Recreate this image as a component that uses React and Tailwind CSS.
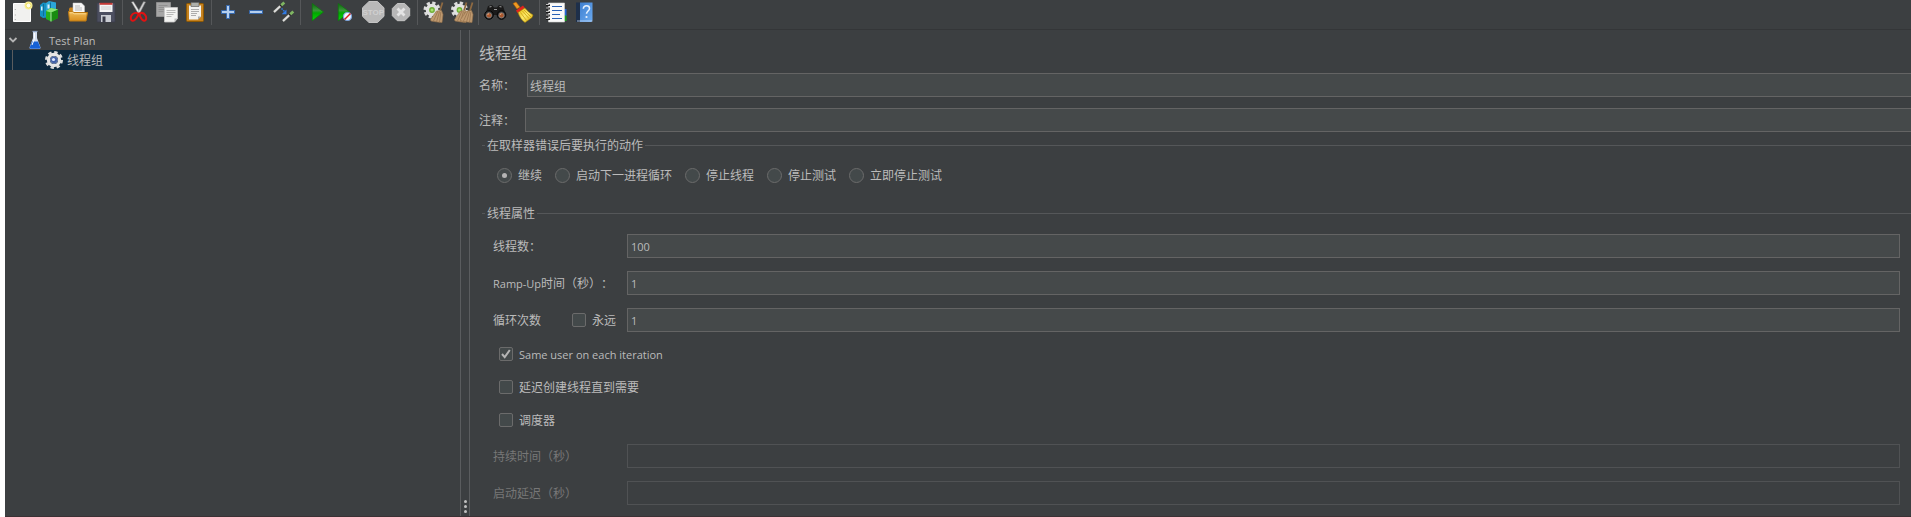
import React from "react";

const Svg = ({ children }) => (
  <svg viewBox="0 0 24 24" className="size-6 shrink-0" aria-hidden="true" fill="none">
    {children}
  </svg>
);

const Defs = () => (
  <svg className="absolute size-0" aria-hidden="true">
    <defs>
      <linearGradient id="green" x1="0" y1="0" x2="0" y2="1">
        <stop offset="0" stopColor="#0a6b0a" />
        <stop offset="0.4" stopColor="#3a943a" />
        <stop offset="0.55" stopColor="#00a800" />
        <stop offset="1" stopColor="#06d806" />
      </linearGradient>
      <linearGradient id="folder" x1="0" y1="0" x2="0" y2="1">
        <stop offset="0" stopColor="#f0bd5a" />
        <stop offset="1" stopColor="#d98f1e" />
      </linearGradient>
      <linearGradient id="blueBook" x1="0" y1="0" x2="1" y2="1">
        <stop offset="0" stopColor="#3f7fd0" />
        <stop offset="1" stopColor="#6aaaf0" />
      </linearGradient>
      <linearGradient id="yellowBroom" x1="0" y1="0" x2="1" y2="1">
        <stop offset="0" stopColor="#e9b80c" />
        <stop offset="0.5" stopColor="#fbe96a" />
        <stop offset="1" stopColor="#d9a800" />
      </linearGradient>
    </defs>
  </svg>
);

const NewIcon = () => (
  <Svg>
    <path d="M3.500 3.500h17v18h-17z" fill="#f1f1ef" stroke="#fff" />
    <path d="M5.300 9v1M5.300 14.500v1M5.300 19v1" stroke="#aaa" strokeWidth="1" />
    <circle cx="18.500" cy="5.500" r="4" fill="#f8ef9a" />
    <circle cx="18.500" cy="5.500" r="2.500" fill="#fffde6" stroke="#e9d84a" strokeWidth="0.800" />
  </Svg>
);
const TemplatesIcon = () => (
  <Svg>
    <path d="M2 5l3-2.500 4 .5v14.500l-4 .5-3-2z" fill="#1592c4" />
    <path d="M8 3l3-2 7 1.500v9l-7 5-3-2z" fill="#2ba6d8" />
    <path d="M12.500 2.500v7M5.500 4v12" stroke="#0f6f99" strokeWidth="1" />
    <path d="M9.500 4.500h2v4h-2zM3 6.500h1.500v4H3z" fill="#d7f0fa" />
    <path d="M8 11l5-3 7 1.500v8.500l-7 3.500-5-2.500z" fill="#27b01c" />
    <path d="M13 12.500l7-3v8.500l-7 3.500z" fill="#178c10" />
    <path d="M8 11l5-3 7 1.500-7 3z" fill="#8ae477" />
    <path d="M13 12.500v9" stroke="#d5f5cf" strokeWidth="0.800" />
  </Svg>
);
const OpenIcon = () => (
  <Svg>
    <path d="M3 13V8.500l1-1h4V16H3z" fill="#c9821c" />
    <path d="M7 3h8.500L18.500 6v9H7z" fill="#f7f7f7" stroke="#c9c9c9" strokeWidth="0.500" />
    <path d="M9 6h5M9 8h7M9 10h7" stroke="#aaa" strokeWidth="0.800" />
    <path d="M2.500 11.500h4l1.500 1h13.500l-1.500 8.500H3.500z" fill="url(#folder)" stroke="#bf7b12" />
    <path d="M3.800 12.800h3l1.500 1h11.500" stroke="#ffe2a0" strokeWidth="0.800" />
  </Svg>
);
const SaveIcon = () => (
  <Svg>
    <path d="M3 3h17.500l.5.500V22H3z" fill="#4c4f60" stroke="#3a3c4a" strokeWidth="0.800" />
    <path d="M5.500 3h13v9h-13z" fill="#f4f4f4" />
    <path d="M5.500 2.800h13v2h-13z" fill="#c53a36" />
    <path d="M7 7h10M7 9h10" stroke="#c6c6c6" strokeWidth="0.800" />
    <path d="M7 15h10v7H7z" fill="#c9ccd2" />
    <path d="M8.500 16.500h3V22h-3z" fill="#393b48" />
  </Svg>
);
const CutIcon = () => (
  <Svg>
    <path d="M4.500 2l2-.3 7.500 12-2 1z" fill="#e8e8e8" stroke="#8c8c8c" strokeWidth="0.500" />
    <path d="M18.500 2l-2-.3L10 13.500l2 1z" fill="#cfcfcf" stroke="#888" strokeWidth="0.500" />
    <path d="M11 13.500c-2-1-5-.5-6.500 2s-.5 5 1 5.200c3 .3 4-3 6.500-6.700z" stroke="#e01212" strokeWidth="2" />
    <path d="M12.500 13.500c2-1 4.500-.5 6 2s.5 5-1 5.200c-3 .3-3.500-3-5.500-6.700z" stroke="#e01212" strokeWidth="2" />
  </Svg>
);
const CopyIcon = () => (
  <Svg>
    <path d="M1.500 2.500h14v14h-14z" fill="#a6a6a6" stroke="#8e8e8e" />
    <path d="M3.500 5.500h9M3.500 7.500h9M3.500 9.500h6M3.500 11.500h5" stroke="#8a8a8a" strokeWidth="0.800" />
    <path d="M9.500 7.500h13v11l-3 3.500h-10z" fill="#f3f3f1" stroke="#c8c8c8" strokeWidth="0.800" />
    <path d="M11.500 10.500h9M11.500 12.500h9M11.500 14.500h7M11.500 16.500h5" stroke="#aaa" strokeWidth="0.800" />
    <path d="M22.500 18.500l-3 3.500v-3.500z" fill="#bbb" />
  </Svg>
);
const PasteIcon = () => (
  <Svg>
    <rect x="3.500" y="3.500" width="17" height="18" rx="1" fill="#c58220" stroke="#8f5902" />
    <path d="M6 5.500h12v11l-3 3H6z" fill="#f3f3f1" />
    <path d="M18 16.500l-3 3v-3z" fill="#aaa" />
    <path d="M8 2.500h8v4H8z" fill="#aeb0ab" stroke="#666" strokeWidth="0.700" />
    <path d="M8 9.500h8M8 11.500h8M8 13.500h6M8 15.500h5" stroke="#a5a5a5" strokeWidth="0.900" />
  </Svg>
);
const PlusIcon = () => (
  <Svg>
    <path d="M10.500 5.500h3v5h5v3h-5v5h-3v-5h-5v-3h5z" fill="#b5cfee" stroke="#3568ae" strokeLinejoin="round" />
  </Svg>
);
const MinusIcon = () => (
  <Svg>
    <path d="M5.500 10.500h13v3h-13z" fill="#b5cfee" stroke="#3568ae" strokeLinejoin="round" />
  </Svg>
);
const ToggleIcon = () => (
  <Svg>
    <path d="M2 12l7-6.500M11 21l7-6.500" stroke="#77796f" strokeWidth="2.800" />
    <path d="M2 12l7-6.500M11 21l7-6.500" stroke="#dedede" strokeWidth="1.800" />
    <path d="M8.300 6.200l1-.9M17.300 15.200l1-.9" stroke="#222" strokeWidth="2.600" />
    <path d="M9.300 5.200l3-2.700M18.300 14.200l3-2.700" stroke="#7fb662" strokeWidth="2.800" />
    <path d="M9.500 8.500l3 3" stroke="#2f7be6" strokeWidth="1.500" strokeDasharray="1.500 1" />
    <path d="M14.500 9.500v4.800H9.700z" fill="#2f7be6" />
  </Svg>
);
const StartIcon = () => (
  <Svg>
    <path d="M7.300 3.500L18.500 12 7.300 20.700z" fill="url(#green)" stroke="#0b7a0b" strokeWidth="0.700" />
  </Svg>
);
const StartNoPauseIcon = () => (
  <Svg>
    <path d="M5.300 3.500L16.500 12 5.300 20.700z" fill="url(#green)" stroke="#0b7a0b" strokeWidth="0.700" />
    <circle cx="14.500" cy="16.500" r="4" fill="#f4f7ff" stroke="#7aa2dc" strokeWidth="1.200" />
    <path d="M11.500 19.500l6-6" stroke="#d81e1e" strokeWidth="1.500" />
  </Svg>
);
const StopIcon = () => (
  <Svg>
    <path d="M8 1.500h8.500l6.500 6.300v8.500L16.500 22.500H8L1.500 16.300V7.800z" fill="#b9b9b9" stroke="#c4c4c4" />
    <text x="12.200" y="15.200" fontSize="8" fontWeight="700" fontFamily="Liberation Sans, sans-serif" textAnchor="middle" fill="#d0d0d0">
      STOP
    </text>
  </Svg>
);
const ShutdownIcon = () => (
  <Svg>
    <path d="M8.300 3.500h7.400l5 5v7.200l-5 5H8.300l-5-5V8.500z" fill="#b7b7b7" stroke="#c4c4c4" />
    <path d="M8.500 8.500l7 7M15.500 8.500l-7 7" stroke="#e4e4e4" strokeWidth="2.800" />
  </Svg>
);
const Cog = ({ cx }) => (
  <g>
    <circle cx={cx} cy="10" r="7" stroke="#dcdcdc" strokeWidth="3" strokeDasharray="3.200 2.300" />
    <circle cx={cx} cy="10" r="4.600" fill="#6fae35" stroke="#e2e2e2" strokeWidth="3.400" />
    <circle cx={cx} cy="10" r="1.500" fill="#a6e070" />
  </g>
);
const Brush = ({ x = 0 }) => (
  <g transform={`translate(${x} 0)`}>
    <path d="M20.500 2.500l-2.500 8" stroke="#8f6a42" strokeWidth="1.800" />
    <path d="M14.500 11l5-.5 1.500 4-1 8-5-.5-6-1-.5-1.500z" fill="#bf9a70" stroke="#94704a" strokeWidth="0.600" />
    <path d="M16 11l-4.500 10M17.500 11.500l-3 10.500M18.800 12l-1.300 10.500" stroke="#94704a" strokeWidth="0.700" />
  </g>
);
const ClearIcon = () => (
  <Svg>
    <Cog cx={10} />
    <Brush />
  </Svg>
);
const ClearAllIcon = () => (
  <Svg>
    <Cog cx={9.5} />
    <Brush x={-4} />
    <Brush x={2} />
  </Svg>
);
const SearchIcon = () => (
  <Svg>
    <path d="M5 6l4-1 2 2.500h3L16 5l4 1 3 9H2z" fill="#1a1a1a" />
    <path d="M6.500 7l2-.5M16.500 6.500l2 .5M11 9.500h3" stroke="#999" strokeWidth="1.200" />
    <circle cx="6" cy="15" r="4.300" fill="#2a2a2a" stroke="#050505" />
    <circle cx="18.500" cy="15" r="4.300" fill="#2a2a2a" stroke="#050505" />
    <circle cx="6" cy="15.300" r="2.600" fill="#a9562c" stroke="#888" strokeWidth="0.800" />
    <circle cx="18.500" cy="15.300" r="2.600" fill="#a9562c" stroke="#888" strokeWidth="0.800" />
    <path d="M4.500 14.500l1.500-.8M17 14.500l1.500-.8" stroke="#f0b58a" strokeWidth="1" />
  </Svg>
);
const BroomIcon = () => (
  <Svg>
    <path d="M2 3.500l3-1.500 4 5-3 2z" fill="#ef9a22" stroke="#a65c08" strokeWidth="0.600" />
    <path d="M5 10.500l7-5 1.800 2.500-7.300 5z" fill="#e2241c" />
    <path d="M7 12.500l6.800-4.500c2.500 3 5 5 8.200 7l-1 2.500-7 5c-3-2-5.500-5.500-7-10z" fill="url(#yellowBroom)" stroke="#a98400" strokeWidth="0.600" />
    <path d="M9.500 12.500l6 8M11.500 11l6.500 7.500M13 10l7 7" stroke="#c99a08" strokeWidth="0.700" />
  </Svg>
);
const ListIcon = () => (
  <Svg>
    <path d="M18 9h4.500v7H18z" fill="#2467d8" />
    <path d="M18 15.500h4.500V21H18z" fill="#18a01e" />
    <path d="M4.500 3h16v19h-16z" fill="#fafafa" stroke="#d5d5d5" strokeWidth="0.600" />
    <path d="M8 6.500h10M8 10.500h10M8 14.500h8M8 18.500h10" stroke="#2b62b5" strokeWidth="1.200" />
    <path d="M2 5h4M2 8.500h4M2 12h4M2 15.500h4M2 19h4" stroke="#1a1a1a" strokeWidth="1.800" />
    <path d="M2 4.500h3.500M2 8h3.500M2 11.500h3.500M2 15h3.500M2 18.500h3.500" stroke="#e6e6e6" strokeWidth="0.800" />
  </Svg>
);
const HelpIcon = () => (
  <Svg>
    <path d="M4 2.500h5v19.500H4z" fill="#1d2f4a" />
    <path d="M8 2.500h12.500V20l-1 2H8z" fill="url(#blueBook)" />
    <path d="M5 21h15.500" stroke="#c4d8f2" strokeWidth="0.800" />
    <path d="M11.300 8.700c.2-2 1.500-3 3.200-3 1.800 0 3 1 3 2.700 0 2.300-3 2.800-3 5.300" stroke="#e8f2ff" strokeWidth="1.500" />
    <circle cx="14.500" cy="17" r="1.100" fill="#e8f2ff" />
  </Svg>
);

const toolbar = [
  [["New", NewIcon], ["Templates", TemplatesIcon], ["Open", OpenIcon], ["Save", SaveIcon]],
  [["Cut", CutIcon], ["Copy", CopyIcon], ["Paste", PasteIcon]],
  [["Expand all", PlusIcon], ["Collapse all", MinusIcon], ["Toggle", ToggleIcon]],
  [["Start", StartIcon], ["Start no pauses", StartNoPauseIcon], ["Stop", StopIcon], ["Shutdown", ShutdownIcon]],
  [["Clear", ClearIcon], ["Clear all", ClearAllIcon]],
  [["Search", SearchIcon], ["Reset search", BroomIcon]],
  [["Function helper", ListIcon], ["Help", HelpIcon]],
];

function Toolbar() {
  return (
    <div role="toolbar" className="flex h-[30px] shrink-0 items-start border-b border-[#343638] pl-[3px]">
      {toolbar.map((group, i) => (
        <React.Fragment key={i}>
          {i > 0 && <span className="mx-0.5 h-[25px] w-px bg-[#555759]" />}
          {group.map(([name, Icon]) => (
            <button key={name} type="button" aria-label={name} className="flex w-7 justify-center">
              <Icon />
            </button>
          ))}
        </React.Fragment>
      ))}
    </div>
  );
}

const Latin = ({ children }) => <span className="font-['Open_Sans',sans-serif] text-[11px]">{children}</span>;

function Tree() {
  return (
    <nav className="w-[456px] shrink-0 border-r border-[#5a5c5e]">
      <div className="flex h-5 items-center pl-[3px]">
        <svg viewBox="0 0 10 10" className="size-2.5" fill="none" aria-hidden="true">
          <path d="M1.500 3L5 6.500 8.500 3" stroke="#b4b4b4" strokeWidth="1.800" />
        </svg>
        <svg viewBox="0 0 20 20" className="ml-[7px] size-5" aria-hidden="true">
          <path d="M8 2h4v6l3.500 9.500q0 1.500-1.500 1.500H6Q4.500 19 4.500 17.500L8 8z" fill="#d4dff0" />
          <path d="M7 11.500h6l2.300 6q0 1.300-1.300 1.300H6q-1.300 0-1.300-1.300z" fill="#1761d6" />
          <path d="M9.500 3v5.500L7 15" stroke="#fff" strokeWidth="1" fill="none" />
          <path d="M7.500 1.500h5" stroke="#8fa3c2" strokeWidth="1.200" />
        </svg>
        <a href="#plan" className="ml-1 leading-5">
          <Latin>Test Plan</Latin>
        </a>
      </div>
      <div className="flex h-5 items-center bg-[#0d293e] pl-[7px]">
        <span className="h-5 w-px bg-[#5a5c5e]" />
        <svg viewBox="0 0 20 20" className="ml-[31px] size-5" fill="none" aria-hidden="true">
          <circle cx="10" cy="10" r="7.800" stroke="#dcdcdc" strokeWidth="2.400" strokeDasharray="3.400 2.726" />
          <circle cx="10" cy="10" r="5.600" stroke="#e6e6e6" strokeWidth="3.200" />
          <circle cx="10" cy="10" r="3.600" fill="#3f5fa8" stroke="#7d8fb5" strokeWidth="0.800" />
          <circle cx="9.500" cy="9.500" r="1.600" fill="#dce8ff" />
        </svg>
        <a href="#thread-group" className="ml-[3px] leading-5">线程组</a>
      </div>
    </nav>
  );
}

const fieldBase =
  "h-6 w-full min-w-0 rounded-none border border-[#646464] bg-[#45494a] text-[#bbb] outline-none disabled:border-[#505254] disabled:bg-transparent";

function Check({ id, label, checked }) {
  return (
    <div className="flex h-5 items-center gap-1.5">
      <span className="relative flex">
        <input
          id={id}
          type="checkbox"
          defaultChecked={checked}
          className="peer size-3.5 appearance-none rounded-[2px] border border-[#6b6b6b] bg-[#43494a]"
        />
        <svg viewBox="0 0 14 14" className="pointer-events-none absolute inset-0 hidden size-3.5 peer-checked:block" fill="none" aria-hidden="true">
          <path d="M3 7l2.700 3.200L10.800 3" stroke="#b4b4b4" strokeWidth="2" />
        </svg>
      </span>
      <label htmlFor={id}>{label}</label>
    </div>
  );
}

function Row({ id, label, value, disabled, extra }) {
  return (
    <div className="flex items-center">
      <div className="flex w-[134px] shrink-0 items-center justify-between pr-[11px]">
        <label htmlFor={id} className={disabled ? "whitespace-nowrap text-[#777]" : "whitespace-nowrap"}>
          {label}
        </label>
        {extra}
      </div>
      <input
        id={id}
        type="text"
        defaultValue={value}
        disabled={disabled}
        className={fieldBase + " px-[3px] font-['Open_Sans',sans-serif] text-[11px]"}
      />
    </div>
  );
}

const actions = ["继续", "启动下一进程循环", "停止线程", "停止测试", "立即停止测试"];

function ThreadGroup() {
  return (
    <main className="min-w-0 flex-1 border-l border-[#5a5c5e] pl-[9px]">
      <h1 className="pt-[10px] text-[16px] leading-6">线程组</h1>
      <div className="mt-[9px] flex items-center">
        <label htmlFor="name" className="w-12 shrink-0">名称：</label>
        <input id="name" type="text" defaultValue="线程组" className={fieldBase + " border-r-0 px-0.5"} />
      </div>
      <div className="mt-[11px] flex items-center">
        <label htmlFor="comment" className="w-[46px] shrink-0">注释：</label>
        <input id="comment" type="text" className={fieldBase + " border-r-0 px-0.5"} />
      </div>

      <fieldset className="mt-1 ml-[3px] border-t border-[#555759] pb-5">
        <legend className="ml-[3px] px-0.5 leading-[18px]">在取样器错误后要执行的动作</legend>
        <div className="flex gap-[13px] pt-3 pl-[15px]">
          {actions.map((a, i) => (
            <label key={a} className="flex h-[18px] items-center gap-1.5 whitespace-nowrap">
              <input
                type="radio"
                name="onError"
                defaultChecked={i === 0}
                className="grid size-[15px] appearance-none place-content-center rounded-full border border-[#6b6b6b] bg-[#43494a] before:size-[5px] before:rounded-full checked:before:bg-[#b4b4b4]"
              />
              {a}
            </label>
          ))}
        </div>
      </fieldset>

      <fieldset className="ml-[3px] border-t border-[#555759] pr-[11px] pb-[11px] pl-[11px]">
        <legend className="-ml-2 px-0.5 leading-[18px]">线程属性</legend>
        <div className="flex flex-col gap-[13px] pt-3">
          <Row id="threads" label="线程数：" value="100" />
          <Row id="ramp" label={<><Latin>Ramp-Up</Latin>时间（秒）：</>} value="1" />
          <Row id="loops" label="循环次数" value="1" extra={<Check id="forever" label="永远" />} />
        </div>
        <div className="flex flex-col gap-[13px] pt-3 pb-3.5 pl-1.5">
          <Check id="same" label={<Latin>Same user on each iteration</Latin>} checked />
          <Check id="delay" label="延迟创建线程直到需要" />
          <Check id="scheduler" label="调度器" />
        </div>
        <div className="flex flex-col gap-[13px]">
          <Row id="duration" label="持续时间（秒）" disabled />
          <Row id="startup" label="启动延迟（秒）" disabled />
        </div>
      </fieldset>
    </main>
  );
}

export default function App() {
  return (
    <div className="flex min-h-screen flex-col overflow-hidden border-l-[5px] border-white bg-[#3c3f41] font-['Noto_Sans_CJK_SC',sans-serif] text-[12px] leading-[18px] text-[#bbb] [text-spacing-trim:space-all]">
      <Defs />
      <Toolbar />
      <div className="flex flex-1 border-b border-[#3b3134]">
        <Tree />
        <div role="separator" aria-orientation="vertical" className="flex w-2 shrink-0 flex-col items-center justify-end gap-0.5 pb-[3px]">
          <span className="size-[3px] rounded-full bg-[#c0c0c0]" />
          <span className="size-[3px] rounded-full bg-[#c0c0c0]" />
          <span className="size-[3px] rounded-full bg-[#c0c0c0]" />
        </div>
        <ThreadGroup />
      </div>
    </div>
  );
}
